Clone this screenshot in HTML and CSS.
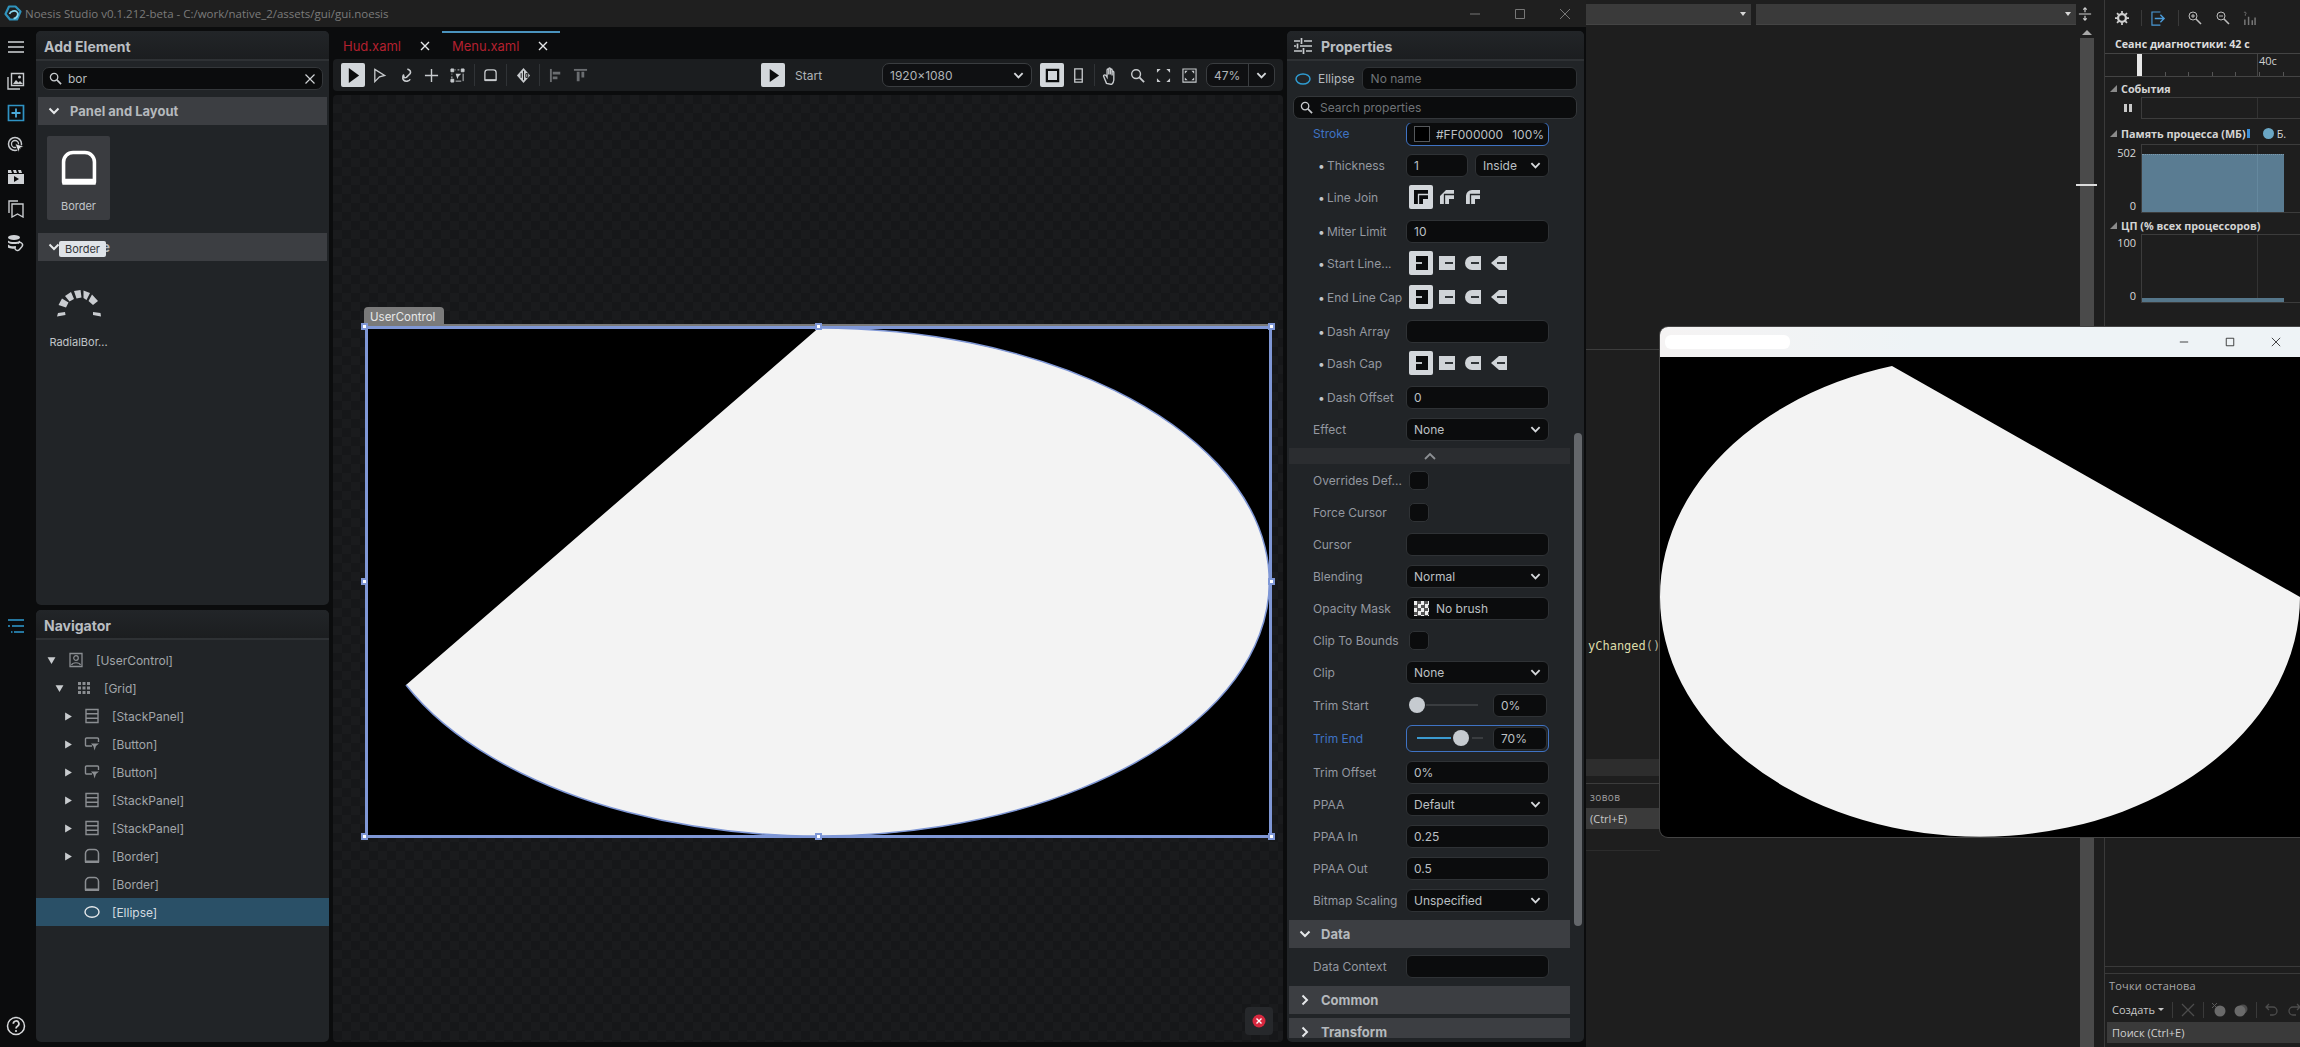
FILE: index.html
```html
<!DOCTYPE html>
<html lang="en">
<head>
<meta charset="utf-8">
<title>Noesis Studio</title>
<link rel="stylesheet" href="styles.css">
</head>
<body>
<svg class="defs" width="0" height="0" aria-hidden="true">
  <symbol id="i-chev" viewBox="0 0 12 12"><path d="M1.500 3.500 6 8l4.500-4.500" fill="none" stroke="currentColor" stroke-width="2"/></symbol>
  <symbol id="i-right" viewBox="0 0 12 12"><path d="M3.500 1.500 8 6l-4.500 4.500" fill="none" stroke="currentColor" stroke-width="2"/></symbol>
  <symbol id="i-search" viewBox="0 0 14 14"><circle cx="5.500" cy="5.500" r="4" fill="none" stroke="currentColor" stroke-width="1.400"/><path d="m8.500 8.500 4.500 4.500" stroke="currentColor" stroke-width="1.800"/></symbol>
  <symbol id="i-border" viewBox="0 0 16 16"><path d="M1.500 14V5.500a4 4 0 0 1 4-4h5a4 4 0 0 1 4 4V14z" fill="none" stroke="currentColor" stroke-width="1.500" stroke-linejoin="round"/><path d="M1 12.500h14V15H1z" fill="currentColor"/></symbol>
  <symbol id="i-stack" viewBox="0 0 16 16"><path d="M2 1.500h12v13H2zM2 5.800h12M2 10.200h12" fill="none" stroke="currentColor" stroke-width="1.400"/></symbol>
  <symbol id="i-button" viewBox="0 0 16 16"><path d="M8 10H2.500a1 1 0 0 1-1-1V3a1 1 0 0 1 1-1h11a1 1 0 0 1 1 1v3" fill="none" stroke="currentColor" stroke-width="1.400"/><path d="M7 7.500h8l-3 2.500-1.500 4.500-1-4z" fill="currentColor"/></symbol>
  <symbol id="i-tri" viewBox="0 0 8 8"><path d="M1 0.500 7 4 1 7.500z" fill="currentColor"/></symbol>
  <symbol id="i-join1" viewBox="0 0 16 16"><path d="M1 15V1h14v9h-5v5z" fill="currentColor"/><path d="M5.500 15V5.500H15" fill="none" stroke="var(--cut)" stroke-width="1.300"/></symbol>
  <symbol id="i-join2" viewBox="0 0 16 16"><path d="M1 15V7l6-6h8v9h-5v5z" fill="currentColor"/><path d="M5.500 15V5.500H15" fill="none" stroke="var(--cut)" stroke-width="1.300"/></symbol>
  <symbol id="i-join3" viewBox="0 0 16 16"><path d="M1 15V7a6 6 0 0 1 6-6h8v9h-5v5z" fill="currentColor"/><path d="M5.500 15V5.500H15" fill="none" stroke="var(--cut)" stroke-width="1.300"/></symbol>
  <symbol id="i-cap1" viewBox="0 0 16 16"><path d="M3 1h12v14H3z" fill="currentColor"/><path d="M0 7.100h9v1.800H0z" fill="var(--cut)"/></symbol>
  <symbol id="i-cap2" viewBox="0 0 16 16"><path d="M0 1h16v14H0z" fill="currentColor"/><path d="M6 7.100h8v1.800H6z" fill="var(--cut)"/></symbol>
  <symbol id="i-cap3" viewBox="0 0 16 16"><path d="M7 1h9v14H7a7 7 0 0 1 0-14z" fill="currentColor"/><path d="M6 7.100h8v1.800H6z" fill="var(--cut)"/></symbol>
  <symbol id="i-cap4" viewBox="0 0 16 16"><path d="M8 1h8v14H8L0 8z" fill="currentColor"/><path d="M6 7.100h8v1.800H6z" fill="var(--cut)"/></symbol>
</svg>

<div class="studio">
  <header class="titlebar">
    <svg class="logo" viewBox="0 0 18 18"><path d="M5 1.500h6.500l5 5-3.500 8H6L1.500 9z" fill="none" stroke="#2f93bd" stroke-width="2.200" stroke-linejoin="round"/><path d="M5.500 9c1-3 5.500-4 7.500-2s0 6.500-3.500 6.500" fill="none" stroke="#8ad6ee" stroke-width="1.700"/></svg>
    <span class="title-text">Noesis Studio v0.1.212-beta - C:/work/native_2/assets/gui/gui.noesis</span>
    <div class="winbtns">
      <svg viewBox="0 0 12 12"><path d="M1 6h10" stroke="#777" stroke-width="1"/></svg>
      <svg viewBox="0 0 12 12"><path d="M1.500 1.500h9v9h-9z" fill="none" stroke="#777"/></svg>
      <svg viewBox="0 0 12 12"><path d="m1 1 10 10M11 1 1 11" stroke="#777"/></svg>
    </div>
  </header>

  <div class="studio-main">
    <nav class="rail">
      <button class="rail-btn"><svg viewBox="0 0 18 18"><path d="M1 4h16M1 9h16M1 14h16" stroke="#d2d5d8" stroke-width="1.700"/></svg></button>
      <button class="rail-btn rail-gap"><svg viewBox="0 0 18 18"><path d="M1 5v12h12" fill="none" stroke="#c8cbce" stroke-width="1.400"/><path d="M4.500 1.500h12v12h-12z" fill="none" stroke="#c8cbce" stroke-width="1.400"/><circle cx="12.500" cy="5" r="1.500" fill="#c8cbce"/><path d="m6 12 3-4 2.500 2.500 1.500-1.500 3 3z" fill="#c8cbce"/></svg></button>
      <button class="rail-btn"><svg viewBox="0 0 18 18"><path d="M1.500 1.500h15v15h-15z" fill="none" stroke="#2f93c4" stroke-width="1.700"/><path d="M9 4.500v9M4.500 9h9" stroke="#4aa9d8" stroke-width="1.800"/></svg></button>
      <button class="rail-btn"><svg viewBox="0 0 18 18"><circle cx="8" cy="8" r="6.500" fill="none" stroke="#c8cbce" stroke-width="1.500"/><circle cx="8" cy="8" r="3.500" fill="none" stroke="#c8cbce" stroke-width="1.300"/><path d="m8 7.500 9 3-4 1.500-1.500 4.500z" fill="#e0e2e4" stroke="#0b0c0d" stroke-width=".8"/></svg></button>
      <button class="rail-btn"><svg viewBox="0 0 18 18"><path d="M1 6h16v10H1z" fill="#cfd2d5"/><path d="m1 2 3 0 1 3H1zm5 0h3l1 3H7zm5 0h3l1 3h-3z" fill="#cfd2d5"/><path d="m7 8 5 3-5 3z" fill="#0b0c0d"/></svg></button>
      <button class="rail-btn"><svg viewBox="0 0 18 18"><path d="M2 13V1h9" fill="none" stroke="#c8cbce" stroke-width="1.400"/><path d="M5 4h11v13l-5.500-3L5 17z" fill="none" stroke="#c8cbce" stroke-width="1.400"/></svg></button>
      <button class="rail-btn rail-gap"><svg viewBox="0 0 18 18"><ellipse cx="7" cy="3.500" rx="6" ry="2.500" fill="#cfd2d5"/><path d="M1 6.500c2 2 10 2 12 0v2c-2 2-10 2-12 0zM1 10.500c2 2 6 2 8 1.500l-1 2.500c-3 .5-6 0-7-1z" fill="#cfd2d5"/><path d="M11 9.500a2.500 2.500 0 0 1 4 3l-2.500 3a2.500 2.500 0 0 1-4-3" fill="none" stroke="#cfd2d5" stroke-width="1.400"/></svg></button>
      <button class="rail-btn rail-nav"><svg viewBox="0 0 18 18"><path d="M1 3h16M5 9h12M1 9h2M7 15h10" stroke="#2f9bd0" stroke-width="1.600"/><path d="M4 15h1.500" stroke="#2f9bd0" stroke-width="1.600"/></svg></button>
      <button class="rail-btn rail-help"><svg viewBox="0 0 20 20"><circle cx="10" cy="10" r="8.500" fill="none" stroke="#d8dadc" stroke-width="1.500"/><path d="M7.300 7.800A2.800 2.800 0 1 1 11.500 10.200c-1 .6-1.500 1-1.500 2.200" fill="none" stroke="#d8dadc" stroke-width="1.700"/><circle cx="10" cy="15" r="1.100" fill="#d8dadc"/></svg></button>
    </nav>

    <div class="left-col">
      <section class="panel panel-add">
        <h2 class="panel-head">Add Element</h2>
        <div class="search add-search">
          <svg class="search-ico"><use href="#i-search"/></svg>
          <span class="search-val">bor</span>
          <svg class="clear-ico" viewBox="0 0 10 10"><path d="m.5.500 9 9M9.500.500l-9 9" stroke="#cfd2d5" stroke-width="1.200"/></svg>
        </div>
        <div class="band add-band"><svg class="band-chev"><use href="#i-chev"/></svg><span>Panel and Layout</span></div>
        <div class="tile tile-active">
          <svg class="tile-ico"><use href="#i-border"/></svg>
          <span class="tile-label">Border</span>
        </div>
        <div class="band add-band second-band"><svg class="band-chev"><use href="#i-chev"/></svg><span>Shape</span>
          <span class="tooltip">Border</span>
        </div>
        <div class="tile">
          <svg class="tile-ico radial" viewBox="0 0 44 28">
            <path d="M1 23 L8 22 L8.500 25 L0 26.500Z M1.500 15 L5 8.500 L11.500 12.500 L9 17.500Z M8 6 L14 2 L17 9 L12.500 11.500Z M17 1 L23.500 0 L24.500 7.500 L19.500 8.500Z M26.500 .5 L33 3 L29.500 10 L26.500 8Z M35 4.500 L41 11 L36 15 L31.500 11Z M36 22 L43.500 23 L44 26.500 L36 25Z" fill="#c9ccd0"/>
          </svg>
          <span class="tile-label">RadialBor...</span>
        </div>
      </section>

      <section class="panel panel-nav">
        <h2 class="panel-head">Navigator</h2>
        <ul class="tree">
          <li class="node lvl0"><svg class="arrow down"><use href="#i-tri"/></svg><svg class="node-ico" viewBox="0 0 16 16"><path d="M2 1.500h12v13H2z" fill="none" stroke="currentColor" stroke-width="1.300"/><circle cx="8" cy="6" r="2.300" fill="none" stroke="currentColor" stroke-width="1.200"/><path d="M3.500 13c1-3 8-3 9 0" fill="none" stroke="currentColor" stroke-width="1.200"/></svg><span>[UserControl]</span></li>
          <li class="node lvl1"><svg class="arrow down"><use href="#i-tri"/></svg><svg class="node-ico" viewBox="0 0 16 16"><path d="M2 2h3v3H2zM6.500 2h3v3h-3zM11 2h3v3h-3zM2 6.500h3v3H2zM6.500 6.500h3v3h-3zM11 6.500h3v3h-3zM2 11h3v3H2zM6.500 11h3v3h-3zM11 11h3v3h-3z" fill="currentColor"/></svg><span>[Grid]</span></li>
          <li class="node lvl2"><svg class="arrow"><use href="#i-tri"/></svg><svg class="node-ico"><use href="#i-stack"/></svg><span>[StackPanel]</span></li>
          <li class="node lvl2"><svg class="arrow"><use href="#i-tri"/></svg><svg class="node-ico"><use href="#i-button"/></svg><span>[Button]</span></li>
          <li class="node lvl2"><svg class="arrow"><use href="#i-tri"/></svg><svg class="node-ico"><use href="#i-button"/></svg><span>[Button]</span></li>
          <li class="node lvl2"><svg class="arrow"><use href="#i-tri"/></svg><svg class="node-ico"><use href="#i-stack"/></svg><span>[StackPanel]</span></li>
          <li class="node lvl2"><svg class="arrow"><use href="#i-tri"/></svg><svg class="node-ico"><use href="#i-stack"/></svg><span>[StackPanel]</span></li>
          <li class="node lvl2"><svg class="arrow"><use href="#i-tri"/></svg><svg class="node-ico"><use href="#i-border"/></svg><span>[Border]</span></li>
          <li class="node lvl2"><span class="arrow"></span><svg class="node-ico"><use href="#i-border"/></svg><span>[Border]</span></li>
          <li class="node lvl2 selected"><span class="arrow"></span><svg class="node-ico" viewBox="0 0 16 16"><ellipse cx="8" cy="8" rx="7" ry="5.300" fill="none" stroke="currentColor" stroke-width="1.400"/></svg><span>[Ellipse]</span></li>
        </ul>
      </section>
    </div>

    <div class="center-col">
      <div class="tabs">
        <div class="tab"><span class="tab-name">Hud.xaml</span><svg class="tab-x" viewBox="0 0 10 10"><path d="m1 1 8 8M9 1 1 9" stroke="#e6e8ea" stroke-width="1.400"/></svg></div>
        <div class="tab tab-active"><span class="tab-name">Menu.xaml</span><svg class="tab-x" viewBox="0 0 10 10"><path d="m1 1 8 8M9 1 1 9" stroke="#e6e8ea" stroke-width="1.400"/></svg></div>
      </div>
      <div class="toolbar">
        <button class="tb tb-on tb-first"><svg viewBox="0 0 16 16"><path d="M3 0v16L14 8z" fill="#0b0c0d"/></svg></button>
        <button class="tb tb-one"><svg viewBox="0 0 16 16"><path d="M3 1.500 13.500 8 8 9.500 3 14.500z" fill="none" stroke="#c8cbce" stroke-width="1.400"/></svg></button>
        <button class="tb"><svg viewBox="0 0 16 16"><path d="M10 1c3 1 4 3 3 5l-4 4c-2 1-3 0-3-2s-2 3 0 5 6 1 7-1" fill="none" stroke="#c8cbce" stroke-width="1.700"/></svg></button>
        <button class="tb"><svg viewBox="0 0 16 16"><path d="M8 1v14M1 8h14" stroke="#c8cbce" stroke-width="1.500"/></svg></button>
        <button class="tb"><svg viewBox="0 0 16 16"><path d="M1 1h3v3H1zM12 1h3v3h-3zM1 12h3v3H1zM5 2h1M8 2h2M2 6v1M2 9v2M14 6v8M6 14h6" stroke="#c8cbce" fill="#c8cbce"/><path d="M6 6h6l-3 3-1 3z" fill="#c8cbce"/></svg></button>
        <span class="tb-sep sep-a"></span>
        <button class="tb tb-b"><svg viewBox="0 0 16 16"><path d="M2 13V5a3 3 0 0 1 3-3h6a3 3 0 0 1 3 3v8z" fill="none" stroke="#c8cbce" stroke-width="1.400"/><path d="M2 12h12v2H2z" fill="#c8cbce"/></svg></button>
        <span class="tb-sep sep-b"></span>
        <button class="tb tb-c"><svg viewBox="0 0 16 16"><path d="M8 0 15 8l-7 8-7-8z" fill="#c8cbce"/><path d="M8 3v10M5.500 5.500v5M10.500 6h2v4h-2z" stroke="#111" fill="none"/></svg></button>
        <span class="tb-sep sep-b"></span>
        <button class="tb tb-c tb-dim"><svg viewBox="0 0 16 16"><path d="M2 1v14" stroke="#6a6d70" stroke-width="2"/><path d="M4 4h8v3H4zM4 9h5v3H4z" fill="#6a6d70"/></svg></button>
        <button class="tb tb-d tb-dim"><svg viewBox="0 0 16 16"><path d="M1 2h14" stroke="#6a6d70" stroke-width="2"/><path d="M4 4h3v10H4zM9 4h3v6H9z" fill="#6a6d70"/></svg></button>
        <button class="tb tb-on tb-start"><svg viewBox="0 0 16 16"><path d="M4 1v14l10-7z" fill="#0b0c0d"/></svg></button>
        <span class="start-label">Start</span>
        <div class="combo size-combo"><span>1920×1080</span><svg class="chev"><use href="#i-chev"/></svg></div>
        <button class="tb tb-on tb-frame"><svg viewBox="0 0 16 16"><path d="M2 2h12v12H2z" fill="none" stroke="#0b0c0d" stroke-width="2.400"/></svg></button>
        <button class="tb tb-phone"><svg viewBox="0 0 16 16"><path d="M4 1h8v14H4z" fill="none" stroke="#c8cbce" stroke-width="1.400"/><path d="M4 12h8" stroke="#c8cbce"/></svg></button>
        <span class="tb-sep sep-c"></span>
        <button class="tb tb-hand"><svg viewBox="0 0 16 16"><path d="M4 15 1.500 9c-.5-1.500 1-2 2-1l1 1.500V3c0-1 1.500-1 1.500 0v4-5c0-1 1.500-1 1.500 0v5-4c0-1 1.500-1 1.500 0v5-3c0-1 1.500-1 1.500 0v7c0 2-1 3-2 4z" fill="none" stroke="#c8cbce" stroke-width="1.200"/></svg></button>
        <button class="tb"><svg viewBox="0 0 16 16"><circle cx="6.500" cy="6.500" r="4.700" fill="none" stroke="#c8cbce" stroke-width="1.500"/><path d="m10 10 5 5" stroke="#c8cbce" stroke-width="2"/></svg></button>
        <button class="tb"><svg viewBox="0 0 16 16"><path d="M1 1h4L1 5zM15 1h-4l4 4zM1 15h4l-4-4zM15 15h-4l4-4z" fill="#c8cbce"/></svg></button>
        <button class="tb"><svg viewBox="0 0 16 16"><path d="M1 1h14v14H1z" fill="none" stroke="#c8cbce" stroke-width="1.200"/><path d="M3 3h3L3 6zM13 3h-3l3 3zM3 13h3l-3-3zM13 13h-3l3-3z" fill="#c8cbce"/></svg></button>
        <div class="combo zoom-combo"><span>47%</span><i class="zoom-div"></i><svg class="chev"><use href="#i-chev"/></svg></div>
      </div>
      <div class="canvas">
        <div class="surface">
          <span class="surface-tag">UserControl</span>
          <svg class="surface-art" viewBox="0 0 907 512">
            <path d="M453.500 2A451 254 0 1 1 41 359Z" fill="#f3f3f3"/>
            <path d="M453.500 2A451 254 0 1 1 41 359" fill="none" stroke="#7f97d6" stroke-width="1.500"/>
          </svg>
          <i class="handle h-tl"></i><i class="handle h-tc"></i><i class="handle h-tr"></i>
          <i class="handle h-ml"></i><i class="handle h-mr"></i>
          <i class="handle h-bl"></i><i class="handle h-bc"></i><i class="handle h-br"></i>
        </div>
        <button class="err-btn"><svg viewBox="0 0 14 14"><circle cx="7" cy="7" r="6.500" fill="#d8283f"/><path d="m4.500 4.500 5 5m0-5-5 5" stroke="#fff" stroke-width="1.400"/></svg></button>
      </div>
    </div>

    <aside class="panel panel-props">
      <h2 class="panel-head props-head">
        <svg viewBox="0 0 18 16"><path d="M0 3h6M10 3h8M0 8h2M6 8h12M0 13h8M12 13h6" stroke="#c8cbce" stroke-width="1.600"/><path d="M7.500 0v6M3.500 5.500v5M9.500 10v6" stroke="#c8cbce" stroke-width="1.700"/></svg>
        Properties
      </h2>
      <div class="ident">
        <svg viewBox="0 0 16 14"><ellipse cx="8" cy="7" rx="7" ry="5" fill="none" stroke="#2f9bd0" stroke-width="1.500"/></svg>
        <span class="ident-type">Ellipse</span>
        <div class="field ident-name"><span class="ph">No name</span></div>
      </div>
      <div class="search props-search">
        <svg class="search-ico"><use href="#i-search"/></svg>
        <span class="ph">Search properties</span>
      </div>
      <div class="props-scroll">
        <div class="row row-first"><span class="lbl lbl-on">Stroke</span>
          <div class="field ctl ctl-on stroke-field"><i class="swatch"></i><span>#FF000000</span><span class="pct">100%</span></div></div>
        <div class="row"><span class="lbl"><b>•</b>Thickness</span>
          <div class="ctl split"><div class="field thick"><span>1</span></div><div class="field inside"><span>Inside</span><svg class="chev"><use href="#i-chev"/></svg></div></div></div>
        <div class="row row-ico"><span class="lbl"><b>•</b>Line Join</span>
          <div class="ctl icons"><span class="opt on"><svg><use href="#i-join1"/></svg></span><span class="opt"><svg><use href="#i-join2"/></svg></span><span class="opt"><svg><use href="#i-join3"/></svg></span></div></div>
        <div class="row"><span class="lbl"><b>•</b>Miter Limit</span><div class="field ctl"><span>10</span></div></div>
        <div class="row row-ico"><span class="lbl"><b>•</b>Start Line...</span>
          <div class="ctl icons"><span class="opt on"><svg><use href="#i-cap1"/></svg></span><span class="opt"><svg><use href="#i-cap2"/></svg></span><span class="opt"><svg><use href="#i-cap3"/></svg></span><span class="opt"><svg><use href="#i-cap4"/></svg></span></div></div>
        <div class="row row-ico"><span class="lbl"><b>•</b>End Line Cap</span>
          <div class="ctl icons"><span class="opt on"><svg><use href="#i-cap1"/></svg></span><span class="opt"><svg><use href="#i-cap2"/></svg></span><span class="opt"><svg><use href="#i-cap3"/></svg></span><span class="opt"><svg><use href="#i-cap4"/></svg></span></div></div>
        <div class="row"><span class="lbl"><b>•</b>Dash Array</span><div class="field ctl"></div></div>
        <div class="row row-ico"><span class="lbl"><b>•</b>Dash Cap</span>
          <div class="ctl icons"><span class="opt on"><svg><use href="#i-cap1"/></svg></span><span class="opt"><svg><use href="#i-cap2"/></svg></span><span class="opt"><svg><use href="#i-cap3"/></svg></span><span class="opt"><svg><use href="#i-cap4"/></svg></span></div></div>
        <div class="row"><span class="lbl"><b>•</b>Dash Offset</span><div class="field ctl"><span>0</span></div></div>
        <div class="row"><span class="lbl">Effect</span><div class="field ctl sel"><span>None</span><svg class="chev"><use href="#i-chev"/></svg></div></div>
        <div class="collapse-band"><svg viewBox="0 0 12 8"><path d="m1 7 5-5 5 5" fill="none" stroke="#8d9094" stroke-width="1.800"/></svg></div>
        <div class="row"><span class="lbl">Overrides Def...</span><div class="ctl"><i class="check"></i></div></div>
        <div class="row"><span class="lbl">Force Cursor</span><div class="ctl"><i class="check"></i></div></div>
        <div class="row"><span class="lbl">Cursor</span><div class="field ctl"></div></div>
        <div class="row"><span class="lbl">Blending</span><div class="field ctl sel"><span>Normal</span><svg class="chev"><use href="#i-chev"/></svg></div></div>
        <div class="row"><span class="lbl">Opacity Mask</span><div class="field ctl"><i class="checker"></i><span>No brush</span></div></div>
        <div class="row"><span class="lbl">Clip To Bounds</span><div class="ctl"><i class="check"></i></div></div>
        <div class="row"><span class="lbl">Clip</span><div class="field ctl sel"><span>None</span><svg class="chev"><use href="#i-chev"/></svg></div></div>
        <div class="row row-trim"><span class="lbl">Trim Start</span>
          <div class="ctl slider-ctl"><i class="thumb thumb-start"></i><i class="track track-start"></i><div class="field pct-field"><span>0%</span></div></div></div>
        <div class="row row-trimend"><span class="lbl lbl-on">Trim End</span>
          <div class="ctl slider-ctl slider-on"><i class="fill"></i><i class="thumb"></i><i class="track track-end"></i><div class="field pct-field"><span>70%</span></div></div></div>
        <div class="row row-after"><span class="lbl">Trim Offset</span><div class="field ctl"><span>0%</span></div></div>
        <div class="row"><span class="lbl">PPAA</span><div class="field ctl sel"><span>Default</span><svg class="chev"><use href="#i-chev"/></svg></div></div>
        <div class="row"><span class="lbl">PPAA In</span><div class="field ctl"><span>0.25</span></div></div>
        <div class="row"><span class="lbl">PPAA Out</span><div class="field ctl"><span>0.5</span></div></div>
        <div class="row"><span class="lbl">Bitmap Scaling</span><div class="field ctl sel"><span>Unspecified</span><svg class="chev"><use href="#i-chev"/></svg></div></div>
        <div class="band prop-band"><svg class="band-chev"><use href="#i-chev"/></svg><span>Data</span></div>
        <div class="row row-ctx"><span class="lbl">Data Context</span><div class="field ctl"></div></div>
        <div class="band prop-band"><svg class="band-chev"><use href="#i-right"/></svg><span>Common</span></div>
        <div class="band prop-band"><svg class="band-chev"><use href="#i-right"/></svg><span>Transform</span></div>
      </div>
      <i class="props-thumb"></i>
    </aside>
  </div>
</div>

<div class="vs">
  <div class="vs-editor">
    <div class="vs-combos">
      <div class="vs-combo vs-combo-a"><i class="caret"></i></div>
      <div class="vs-combo vs-combo-b"><i class="caret"></i></div>
    </div>
    <div class="vs-line vs-line-a"></div>
    <div class="code-line">yChanged<span>()</span></div>
    <div class="vs-strip"></div>
    <div class="vs-line vs-line-b"></div>
    <div class="vs-calls">зовов</div>
    <div class="vs-find">(Ctrl+E)</div>
    <div class="vs-line vs-line-c"></div>
  </div>
  <div class="vs-scroll">
    <svg class="split-ico" viewBox="0 0 16 16"><path d="M1 8h14M8 1v5M8 10v5M6 3l2-2 2 2M6 13l2 2 2-2" fill="none" stroke="#d0d0d0" stroke-width="1.300"/></svg>
    <i class="sb-up"></i>
    <div class="sb-track sb-track-a"></div>
    <i class="sb-mark"></i>
    <div class="sb-track sb-track-b"></div>
  </div>
  <div class="vs-diag">
    <div class="diag-top">
      <div class="diag-tools">
        <svg class="dt-gear" viewBox="0 0 16 16"><circle cx="8" cy="8" r="4.500" fill="none" stroke="#cfcfcf" stroke-width="2.600"/><path d="M8 0v3M8 13v3M0 8h3M13 8h3M2.300 2.300l2 2M11.700 11.700l2 2M13.700 2.300l-2 2M4.300 11.700l-2 2" stroke="#cfcfcf" stroke-width="2"/></svg>
        <i class="dt-sep"></i>
        <svg class="dt-exit" viewBox="0 0 16 16"><path d="M10 1H1v14h9" fill="none" stroke="#4a9ad8" stroke-width="1.200"/><path d="M4 8h10M10 4l4 4-4 4" fill="none" stroke="#4a9ad8" stroke-width="1.500"/></svg>
        <i class="dt-sep"></i>
        <svg class="dt-zoom" viewBox="0 0 14 14"><circle cx="5" cy="5" r="4" fill="none" stroke="#bdbdbd"/><path d="m8 8 5 5" stroke="#bdbdbd" stroke-width="1.600"/><path d="M3 5h4M5 3v4" stroke="#bdbdbd"/></svg>
        <svg class="dt-zoom dt-zoom2" viewBox="0 0 14 14"><circle cx="5" cy="5" r="4" fill="none" stroke="#bdbdbd"/><path d="m8 8 5 5" stroke="#bdbdbd" stroke-width="1.600"/><path d="M3 5h4" stroke="#bdbdbd"/></svg>
        <svg class="dt-bars" viewBox="0 0 14 16"><path d="M2 9v6M6 6v9M10 10v5M13 7v8" stroke="#777" stroke-width="1.600"/><path d="M1 1.500c2-1 3.500 1 1.500 2v1.500" fill="none" stroke="#777"/></svg>
      </div>
      <div class="diag-head">Сеанс диагностики: 42 с</div>
      <div class="ruler"><i class="ruler-mark"></i><span class="ruler-label">40с</span></div>
      <div class="sec-title sec-events"><i class="sec-tri"></i>События</div>
      <div class="chart-row events-row"><svg class="pause" viewBox="0 0 8 8"><path d="M0 0h3v8H0zM5 0h3v8H5z" fill="#c8c8c8"/></svg><div class="plot plot-ev"></div></div>
      <div class="sec-title sec-mem"><i class="sec-tri"></i>Память процесса (МБ)<i class="mem-bar"></i><i class="mem-dot"></i><span class="mem-b">Б.</span></div>
      <div class="chart-row">
        <div class="axis"><span>502</span><span>0</span></div>
        <div class="plot plot-mem"><i class="mem-fill"></i></div>
      </div>
      <div class="sec-title sec-cpu"><i class="sec-tri"></i>ЦП (% всех процессоров)</div>
      <div class="chart-row chart-cpu">
        <div class="axis"><span>100</span><span>0</span></div>
        <div class="plot plot-cpu"><i class="cpu-fill"></i></div>
      </div>
    </div>
    <div class="diag-bottom">
      <div class="bp-title">Точки останова</div>
      <div class="bp-tools">
        <span class="bp-create">Создать</span><i class="bp-caret"></i><i class="bp-sep"></i>
        <svg class="bp-ico" viewBox="0 0 14 14"><path d="m1 1 12 12M13 1 1 13" stroke="#4c4c4c" stroke-width="1.300"/></svg><i class="bp-sep"></i>
        <svg class="bp-ico" viewBox="0 0 14 14"><path d="m0 0 5 5M5 0 0 5" stroke="#5a5a5a"/><circle cx="8" cy="8" r="5.500" fill="#6a6a6a"/></svg>
        <svg class="bp-ico bp-ico-two" viewBox="0 0 14 14"><circle cx="9" cy="6" r="4.500" fill="#4c4c4c"/><circle cx="6" cy="8" r="5.500" fill="#6a6a6a"/></svg><i class="bp-sep"></i>
        <svg class="bp-ico" viewBox="0 0 14 14"><path d="M4 1 1 4l3 3M1 4h7a4 4 0 0 1 0 8H5" fill="none" stroke="#4c4c4c" stroke-width="1.300"/></svg>
        <svg class="bp-ico bp-ico-two" viewBox="0 0 14 14"><path d="m10 1 3 3-3 3M13 4H6a4 4 0 0 0 0 8h3" fill="none" stroke="#4c4c4c" stroke-width="1.300"/></svg>
      </div>
      <div class="bp-find">Поиск (Ctrl+E)</div>
    </div>
  </div>
</div>

<div class="float-win">
  <div class="float-title">
    <span class="float-blot"></span>
    <div class="float-btns">
      <svg viewBox="0 0 12 12"><path d="M1 6h10" stroke="#222" stroke-width="1"/></svg>
      <svg viewBox="0 0 12 12"><path d="M1.500 1.500h9v9h-9z" fill="none" stroke="#222"/></svg>
      <svg viewBox="0 0 12 12"><path d="m1 1 10 10M11 1 1 11" stroke="#222"/></svg>
    </div>
  </div>
  <svg class="float-art" viewBox="0 0 640 480">
    <path d="M640 240A320 240 0 1 1 232 9Z" fill="#f3f3f3"/>
  </svg>
</div>
</body>
</html>
```
FILE: styles.css
```css
* { box-sizing: border-box; }
html, body { margin: 0; padding: 0; }
body {
  width: 2300px; height: 1047px; overflow: hidden; display: flex;
  background: #1e1e1e; font-family: "Inter", "Liberation Sans", sans-serif; font-size: 12px; color: #c4c8cc;
}
button { border: 0; background: none; padding: 0; margin: 0; display: flex; align-items: center; justify-content: center; }
i { display: block; font-style: normal; }
.defs { position: absolute; }

/* Studio window */
.studio { width: 1586px; height: 1047px; flex: none; background: #0b0c0d; display: flex; flex-direction: column; --cut: #212427; }
.titlebar { height: 27px; flex: none; background: #1f1f1f; display: flex; align-items: center; padding-left: 4px; }
.logo { width: 18px; height: 18px; margin-right: 3px; }
.title-text { font-family: "Open Sans", "Liberation Sans", sans-serif; font-size: 11.5px; color: #7b7b7b; white-space: nowrap; }
.winbtns { margin-left: auto; display: flex; gap: 33px; padding-right: 15px; }
.winbtns svg { width: 12px; height: 12px; }
.studio-main { flex: 1; min-height: 0; display: flex; padding: 4px 2px 5px 0; }

/* Rail */
.rail { width: 36px; flex: none; display: flex; flex-direction: column; }
.rail-btn { width: 32px; height: 32px; flex: none; }
.rail-btn svg { width: 18px; height: 18px; }
.rail-gap { margin-top: 2px; }
.rail-nav { margin-top: 351px; }
.rail-help { margin-top: auto; }
.rail-help svg { width: 20px; height: 20px; }

/* Panels */
.panel { background: #212427; border-radius: 5px; overflow: hidden; }
.panel-head { margin: 0; height: 30px; display: flex; align-items: center; padding-left: 8px; font-size: 14px; font-weight: 700; color: #b9bdc1; background: linear-gradient(#222528, #1b1d1f); box-shadow: inset 0 -2px 0 #2e3134; }
.left-col { width: 293px; flex: none; display: flex; flex-direction: column; gap: 5px; margin-right: 4px; }
.panel-add { height: 574px; flex: none; padding-bottom: 1px; }
.panel-nav { flex: 1; }
.search { height: 23px; background: #0b0c0d; border: 1px solid #34373a; border-radius: 7px; display: flex; align-items: center; }
.search-ico { width: 13px; height: 13px; color: #c8cbce; margin-left: 6px; flex: none; }
.add-search { margin: 6px 6px 0; }
.search-val { margin-left: 6px; font-size: 12px; color: #b7bbbf; }
.clear-ico { width: 10px; height: 10px; margin-left: auto; margin-right: 7px; }
.band { display: flex; align-items: center; background: #3c3e42; font-weight: 700; font-size: 13px; color: #b5b9bd; }
.add-band { margin: 7px 2px 0; height: 28px; position: relative; }
.band-chev { width: 12px; height: 12px; color: #e6e8ea; margin: 0 10px 0 10px; flex: none; }
.second-band { margin-top: 13px; }
.tile { width: 63px; height: 84px; margin: 11px 0 0 11px; display: flex; flex-direction: column; align-items: center; border-radius: 2px; }
.tile-active { background: #3a3c40; }
.tile-ico { width: 42px; height: 38px; margin-top: 13px; color: #fff; flex: none; }
.tile-ico.radial { width: 44px; height: 28px; margin-top: 18px; margin-bottom: 5px; }
.tile-label { margin-top: 12px; font-size: 11px; color: #c0c4c8; }
.tooltip { position: absolute; left: 21px; top: 8px; width: 47px; height: 16px; background: #dfe3e8; color: #33363a; border-radius: 2px; font-size: 11px; font-weight: 400; display: flex; align-items: center; justify-content: center; }

/* Navigator */
.tree { list-style: none; margin: 6px 0 0; padding: 0; }
.node { height: 28px; display: flex; align-items: center; color: #a2a6aa; font-size: 12px; }
.node .arrow { width: 9px; height: 9px; flex: none; color: #c8cbce; display: block; }
.arrow.down { transform: rotate(90deg); }
.node-ico { width: 16px; height: 16px; flex: none; color: #8b8e92; margin: 0 12px 0 12px; }
.lvl0 { padding-left: 11px; }
.lvl1 { padding-left: 19px; }
.lvl2 { padding-left: 28px; }
.lvl2 .node-ico { margin-left: 11px; }
.selected { background: #2a5067; color: #d3dbe0; }
.selected .node-ico { color: #e6e8ea; }

/* Center */
.center-col { flex: 1; min-width: 0; display: flex; flex-direction: column; margin-right: 4px; }
.tabs { height: 28px; flex: none; display: flex; padding-left: 0; }
.tab { width: 109px; display: flex; align-items: center; padding-left: 10px; border-top: 2px solid transparent; }
.tab-active { width: 118px; border-top-color: #4a93bd; }
.tab-name { color: #b3202f; font-size: 13px; }
.tab-x { width: 10px; height: 10px; margin-left: auto; margin-right: 12px; }
.toolbar { height: 32px; flex: none; background: #1b1d1f; border-radius: 4px; display: flex; align-items: center; padding-left: 8px; }
.tb { width: 26px; height: 24px; flex: none; border-radius: 2px; }
.tb svg { width: 15px; height: 15px; }
.tb-on { width: 24px; background: #d3d7db; }
.tb-one { margin-left: 1px; }
.tb-sep { width: 1px; height: 22px; background: #303336; flex: none; }
.sep-a { margin: 0 2px 0 4px; }
.sep-b { margin: 0 3px; }
.sep-c { margin: 0 3px; }
.tb-d { width: 23px; }
.tb-start { margin-left: 169px; }
.start-label { margin-left: 10px; width: 87px; font-size: 12px; color: #b0b4b8; }
.combo { height: 24px; background: #0f1012; border: 1px solid #3a3d40; border-radius: 7px; display: flex; align-items: center; color: #b0b4b8; font-size: 12px; padding-left: 7px; flex: none; }
.chev { width: 11px; height: 11px; color: #d5d8db; margin-left: auto; margin-right: 7px; flex: none; }
.size-combo { width: 150px; }
.tb-frame { margin-left: 8px; }
.tb-phone { width: 26px; margin-left: 1px; }
.tb-hand svg { width: 18px; height: 19px; }
.zoom-combo { width: 69px; margin-left: 4px; }
.zoom-div { width: 1px; height: 22px; background: #3a3d40; margin-left: 8px; }
.canvas {
  flex: 1; margin-top: 4px; position: relative; border-radius: 4px;
  background-color: #18191b;
  background-image: conic-gradient(#1a1b1d 25%, #161719 0 50%, #1a1b1d 0 75%, #161719 0);
  background-size: 18px 18px;
}
.surface { position: absolute; left: 32px; top: 231px; width: 907px; height: 512px; background: #000; border: 3px solid #7f97d6; box-shadow: 0 -2px 0 #7a7a7a; }
.surface-tag { position: absolute; left: -4px; top: -22px; width: 80px; height: 19px; background: #7a7a7a; border-radius: 4px 4px 0 0; color: #e8e8e8; font-size: 11.5px; display: flex; align-items: center; padding-left: 6px; }
.surface-art { position: absolute; left: -3px; top: -3px; width: 907px; height: 512px; }
.handle { position: absolute; width: 7px; height: 7px; background: #fff; border: 2px solid #7f97d6; }
.h-tl { left: -7px; top: -6px; }
.h-tc { left: 447px; top: -6px; }
.h-tr { left: 900px; top: -6px; }
.h-ml { left: -7px; top: 249px; }
.h-mr { left: 900px; top: 249px; }
.h-bl { left: -7px; top: 504px; }
.h-bc { left: 447px; top: 504px; }
.h-br { left: 900px; top: 504px; }
.err-btn { position: absolute; left: 912px; top: 912px; width: 28px; height: 28px; background: #26282b; border-radius: 4px; }
.err-btn svg { width: 14px; height: 14px; }

/* Properties */
.panel-props { width: 297px; flex: none; position: relative; display: flex; flex-direction: column; padding-bottom: 4px; }
.props-head { flex: none; padding-left: 7px; gap: 9px; }
.props-head svg { width: 18px; height: 16px; }
.ident { height: 23px; flex: none; margin-top: 6px; display: flex; align-items: center; padding-left: 8px; }
.ident > svg { width: 16px; height: 14px; }
.ident-type { margin-left: 7px; font-size: 12px; color: #b5b9bd; }
.ident-name { margin-left: 7px; width: 215px; }
.field { height: 23px; background: #0b0c0d; border: 1px solid #2f3235; border-radius: 6px; display: flex; align-items: center; padding-left: 7px; color: #bcc0c4; font-size: 12px; }
.ph { color: #6f7377; font-size: 12px; }
.ident-name .ph { margin-left: 1px; }
.props-search { margin: 6px 7px 0 6px; flex: none; }
.props-search .ph { margin-left: 7px; }
.props-scroll { flex: 1; min-height: 0; overflow: hidden; margin-top: 4px; }
.row { height: 32px; display: flex; align-items: center; padding-left: 26px; }
.row-first { margin-top: -6px; }
.row-ico { margin-bottom: 2px; }
.lbl { width: 93px; flex: none; font-size: 12px; color: #9498a0; white-space: nowrap; overflow: hidden; }
.lbl b { display: inline-block; width: 14px; padding-left: 5px; font-weight: 400; color: #c4c8cc; }
.lbl-on { color: #3f73c4; }
.ctl { width: 143px; flex: none; }
.ctl-on { border-color: #3f73c4; }
.stroke-field { height: 24px; margin-bottom: -2px; padding-left: 7px; }
.stroke-field .pct { margin-left: auto; margin-right: 4px; }
.swatch { width: 16px; height: 16px; background: #000; border: 1px solid #55585b; margin-right: 6px; }
.split { display: flex; gap: 7px; }
.thick { width: 62px; }
.inside { width: 74px; }
.sel .chev, .inside .chev { margin-right: 7px; }
.icons { display: flex; align-items: center; gap: 2px; padding-left: 3px; }
.opt { width: 24px; height: 24px; display: flex; align-items: center; justify-content: center; color: #d0d4d8; }
.opt svg { width: 16px; height: 16px; }
.opt.on { background: #d3d7db; color: #0b0c0d; --cut: #d3d7db; border-radius: 2px; }
.check { width: 20px; height: 19px; margin-left: 3px; background: #0b0c0d; border: 1px solid #2f3235; border-radius: 5px; }
.checker { width: 15px; height: 15px; margin-right: 7px; background: conic-gradient(#555 25%, #eee 0 50%, #555 0 75%, #eee 0); background-size: 7px 7px; }
.collapse-band { margin: 3px 0 0 2px; width: 281px; height: 16px; background: #2b2d30; display: flex; align-items: center; justify-content: center; }
.collapse-band svg { width: 12px; height: 8px; }
.row-trim { margin-top: 1px; }
.row-trimend { height: 34px; }
.row-after { margin-top: 1px; }
.slider-ctl { display: flex; align-items: center; padding-left: 3px; height: 24px; }
.thumb { width: 16px; height: 16px; border-radius: 50%; background: #c6cbd0; flex: none; }
.track { height: 2px; background: #3a3d40; flex: none; }
.track-start { width: 52px; margin-left: 1px; }
.pct-field { width: 54px; margin-left: 15px; padding-left: 7px; }
.slider-on { height: 27px; border: 1px solid #3f73c4; border-radius: 6px; padding-left: 10px; }
.fill { width: 34px; height: 2px; background: #3b9ad0; flex: none; margin-right: 2px; }
.track-end { width: 11px; margin-left: 3px; }
.slider-on .pct-field { margin-left: 10px; height: 23px; }
.prop-band { width: 281px; height: 28px; margin: 4px 0 0 2px; }
.prop-band .band-chev { margin: 0 10px 0 10px; }
.row-ctx { margin-top: 2px; }
.props-thumb { position: absolute; left: 287px; top: 402px; width: 8px; height: 493px; background: #64676b; border-radius: 4px; }

/* Background IDE */
.vs { flex: 1; min-width: 0; display: flex; height: 1047px; background: #1e1e1e; }
.vs-editor { width: 490px; flex: none; overflow: hidden; }
.vs-combos { display: flex; gap: 5px; margin-top: 4px; height: 21px; }
.vs-combo { background: #3a3a3a; display: flex; align-items: center; justify-content: flex-end; padding-right: 5px; border-bottom: 1px solid #444; }
.vs-combo-a { width: 165px; }
.vs-combo-b { width: 320px; }
.caret { width: 0; height: 0; border: 3.5px solid transparent; border-top: 4px solid #d8d8d8; border-bottom: 0; }
.vs-line { height: 1px; background: #3c3c3c; width: 74px; }
.vs-line-a { margin-top: 324px; }
.code-line { margin-top: 287px; height: 18px; line-height: 18px; padding-left: 2px; font-family: "DejaVu Sans Mono", "Liberation Mono", monospace; font-size: 12px; color: #dcdcaa; white-space: nowrap; }
.code-line span { color: #b4b4a0; }
.vs-strip { margin-top: 104px; height: 17px; width: 74px; background: #2d2d2d; }
.vs-line-b { margin-top: 7px; }
.vs-calls { margin-top: 6px; height: 14px; line-height: 14px; padding-left: 4px; font-family: "Open Sans", sans-serif; font-size: 10px; color: #a0a0a0; letter-spacing: .4px; }
.vs-find { margin-top: 4px; width: 74px; height: 21px; line-height: 21px; background: #3a3a3a; font-family: "Open Sans", sans-serif; font-size: 11px; color: #c8c8c8; padding-left: 4px; }
.vs-line-c { margin-top: 21px; background: #2c2c2c; }
.vs-scroll { width: 28px; flex: none; display: flex; flex-direction: column; padding-top: 7px; }
.split-ico { width: 14px; height: 14px; margin-left: 2px; flex: none; }
.sb-up { width: 0; height: 0; margin: 9px 0 0 6px; border: 5px solid transparent; border-bottom: 5px solid #a8a8a8; border-top: 0; }
.sb-track { width: 14px; margin-left: 4px; background: #4a4a4a; }
.sb-track-a { height: 146px; margin-top: 3px; flex: none; }
.sb-mark { width: 21px; height: 2px; background: #dcdcdc; flex: none; }
.sb-track-b { flex: 1; }
.vs-diag { flex: 1; min-width: 0; border-left: 1px solid #3a3a3a; display: flex; flex-direction: column; font-family: "Open Sans", sans-serif; font-size: 11px; color: #d0d0d0; }
.diag-top { height: 967px; flex: none; border-bottom: 1px solid #3a3a3a; }
.diag-tools { height: 36px; display: flex; align-items: center; padding-left: 10px; }
.dt-gear { width: 14px; height: 14px; }
.dt-sep { width: 1px; height: 16px; background: #3a3a3a; margin: 0 9px 0 12px; }
.dt-exit { width: 15px; height: 15px; }
.dt-zoom { width: 14px; height: 14px; }
.dt-zoom2 { margin-left: 14px; }
.dt-bars { width: 13px; height: 15px; margin-left: 13px; }
.diag-head { height: 17px; line-height: 17px; padding-left: 10px; font-weight: 700; font-size: 10.7px; color: #dcdcdc; white-space: nowrap; }
.ruler { height: 24px; border-top: 1px solid #444; border-bottom: 1px solid #444; display: flex; background: linear-gradient(90deg, transparent 152px, #444 152px 153px, transparent 153px), repeating-linear-gradient(90deg, #555 0 1px, transparent 1px 23.6px) 36px 100% / 100% 4px no-repeat; }
.ruler-mark { width: 5px; background: #e8e8e8; margin-left: 32px; }
.ruler-label { margin-left: 117px; font-size: 11px; line-height: 14px; }
.sec-title { display: flex; align-items: center; height: 16px; font-weight: 700; font-size: 10.8px; color: #d4d4d4; white-space: nowrap; padding-left: 5px; }
.sec-tri { width: 0; height: 0; border-left: 7px solid transparent; border-bottom: 7px solid #8a8a8a; margin-right: 4px; }
.sec-events { margin-top: 3px; }
.sec-mem { margin-top: 6px; }
.sec-cpu { margin-top: 4px; }
.chart-row { display: flex; margin-top: 3px; height: 69px; }
.chart-cpu { margin-top: 1px; }
.events-row { height: 22px; align-items: center; margin-top: 1px; }
.pause { width: 8px; height: 8px; margin: 0 9px 0 19px; flex: none; }
.axis { width: 36px; flex: none; display: flex; flex-direction: column; justify-content: space-between; align-items: flex-end; padding: 1px 5px 0 0; font-size: 11px; line-height: 15px; color: #d8d8d8; }
.plot { flex: 1; border: 1px solid #3c3c3c; border-right: 0; display: flex; align-items: flex-end; background: linear-gradient(90deg, transparent 115px, #333 115px 116px, transparent 116px); }
.plot-ev { height: 22px; }
.mem-fill { width: 142px; height: 58px; background: linear-gradient(90deg, #5a7c92 115px, #65889e 115px 116px, #5a7c92 116px); border-top: 1px dotted #7d9aad; }
.cpu-fill { width: 142px; height: 4px; background: #55768a; }
.mem-bar { width: 3px; height: 9px; background: #3d90d8; margin-left: 1px; }
.mem-dot { width: 11px; height: 11px; border-radius: 50%; background: #6aa6c4; margin-left: 13px; }
.mem-b { margin-left: 3px; font-weight: 400; }
.diag-bottom { flex: 1; margin-top: 6px; border-top: 1px solid #3a3a3a; padding-left: 4px; }
.bp-title { height: 23px; line-height: 23px; color: #a8a8a8; font-size: 11px; letter-spacing: .2px; }
.bp-tools { height: 25px; display: flex; align-items: center; padding-left: 3px; }
.bp-create { color: #c8c8c8; }
.bp-caret { width: 0; height: 0; margin-left: 3px; border: 3px solid transparent; border-top: 3px solid #c8c8c8; border-bottom: 0; }
.bp-sep { width: 1px; height: 16px; background: #3a3a3a; margin: 0 8px; flex: none; }
.bp-ico { width: 14px; height: 14px; flex: none; }
.bp-ico-two { margin-left: 8px; }
.bp-find { height: 21px; line-height: 21px; background: #3a3a3a; color: #d0d0d0; padding-left: 5px; margin-left: -2px; }

/* Floating preview window */
.float-win { position: absolute; left: 1660px; top: 327px; width: 640px; height: 510px; background: #000; border-radius: 8px 0 0 8px; overflow: hidden; box-shadow: 0 0 0 1px #444; }
.float-title { height: 30px; background: linear-gradient(90deg, #f5f3f3, #eef3f6 40%); display: flex; align-items: center; }
.float-blot { width: 125px; height: 14px; margin-left: 5px; background: #fff; border-radius: 6px; }
.float-btns { margin-left: auto; display: flex; gap: 36px; padding-right: 19px; }
.float-btns svg { width: 10px; height: 10px; }
.float-art { display: block; width: 640px; height: 480px; }
```
